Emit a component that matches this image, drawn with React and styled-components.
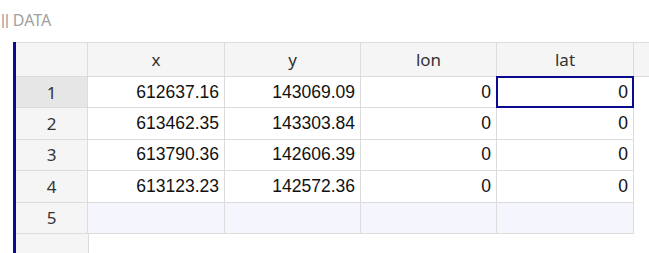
import React from 'react'
import styled, { createGlobalStyle } from 'styled-components'

const GlobalStyle = createGlobalStyle`
  html, body {
    margin: 0;
    padding: 0;
    background: #ffffff;
    overflow: hidden;
  }
`

const rows = [
    { id: 1, x: '612637.16', y: '143069.09', lon: '0', lat: '0' },
    { id: 2, x: '613462.35', y: '143303.84', lon: '0', lat: '0' },
    { id: 3, x: '613790.36', y: '142606.39', lon: '0', lat: '0' },
    { id: 4, x: '613123.23', y: '142572.36', lon: '0', lat: '0' },
]

const columns = ['x', 'y', 'lon', 'lat']

const App = () => {
    return (
        <Page>
            <GlobalStyle />
            <TitleBar>
                <Handle>||</Handle>
                <Title>DATA</Title>
            </TitleBar>
            <Sheet>
                <Grid>
                    <RowHead $header />
                    {columns.map(col => (
                        <HeadCell key={col}>{col}</HeadCell>
                    ))}
                    <AddCell>+</AddCell>

                    {rows.map(row => (
                        <React.Fragment key={row.id}>
                            <RowHead $active={row.id === 1}>{row.id}</RowHead>
                            {columns.map(col => (
                                <Cell key={col} $selected={row.id === 1 && col === 'lat'}>
                                    {row[col]}
                                </Cell>
                            ))}
                            <Blank />
                        </React.Fragment>
                    ))}

                    <RowHead>5</RowHead>
                    {columns.map(col => (
                        <Cell key={col} $new />
                    ))}
                    <Blank />
                </Grid>
                <Filler>
                    <FillerHead />
                </Filler>
            </Sheet>
        </Page>
    )
}

export default App

const Page = styled.div`
    width: 649px;
    height: 253px;
    display: flex;
    flex-direction: column;
    overflow: hidden;
`

const TitleBar = styled.div`
    height: 42px;
    display: flex;
    align-items: center;
    gap: 4px;
    padding-left: 1px;
    padding-bottom: 3px;
    box-sizing: border-box;
    color: #a0a0a0;
    font-family: "Liberation Sans", Arial, sans-serif;
    font-size: 15px;
`

const Handle = styled.span`
    font-family: "Liberation Sans", Arial, sans-serif;
    font-size: 15px;
    letter-spacing: 0px;
    color: #9a9a9a;
`

const Title = styled.span`
    font-family: "Noto Sans", "Open Sans", sans-serif;
    font-size: 16px;
`

const Sheet = styled.div`
    flex: 1;
    margin-left: 13px;
    border-left: 3px solid #0a0a94;
    display: flex;
    flex-direction: column;
`

const Grid = styled.div`
    display: grid;
    grid-template-columns: 72px 137px 136px 136px 137px 40px;
    grid-template-rows: 34px;
    grid-auto-rows: 31.4px;
    border-top: 1px solid #dcdcdc;
    box-sizing: border-box;
`

const RowHead = styled.div`
    display: flex;
    align-items: center;
    justify-content: center;
    background: ${p => (p.$active ? '#e6e6e6' : '#f5f5f5')};
    border-right: 1px solid #dcdcdc;
    border-bottom: 1px solid #dcdcdc;
    color: #333;
    font-family: "Noto Sans", "Open Sans", sans-serif;
    font-size: 17px;
    box-sizing: border-box;
`

const HeadCell = styled.div`
    display: flex;
    align-items: center;
    justify-content: center;
    background: #f5f5f5;
    border-right: 1px solid #dcdcdc;
    border-bottom: 1px solid #dcdcdc;
    color: #333;
    font-family: "Noto Sans", "Open Sans", sans-serif;
    font-size: 17px;
    padding-bottom: 1px;
    box-sizing: border-box;
`

const AddCell = styled(HeadCell)`
    border-right: none;
    justify-content: flex-end;
    padding-right: 0px;
    color: #555;
`

const Cell = styled.div`
    position: relative;
    display: flex;
    align-items: center;
    justify-content: flex-end;
    padding-right: 5px;
    background: ${p => (p.$new ? '#f5f6fd' : '#ffffff')};
    border-right: 1px solid #dcdcdc;
    border-bottom: 1px solid #dcdcdc;
    color: #111;
    font-family: "Liberation Sans", Arial, sans-serif;
    font-size: 17.5px;
    box-sizing: border-box;

    ${p => p.$selected && `
        &::after {
            content: '';
            position: absolute;
            top: -1px;
            left: -1px;
            right: -1px;
            bottom: -1px;
            border: 2px solid #0a0a8c;
        }
    `}
`

const Blank = styled.div`
    background: #ffffff;
`

const Filler = styled.div`
    flex: 1;
    display: flex;
`

const FillerHead = styled.div`
    width: 73px;
    background: #f5f5f5;
    border-right: 1px solid #dcdcdc;
    box-sizing: border-box;
`
